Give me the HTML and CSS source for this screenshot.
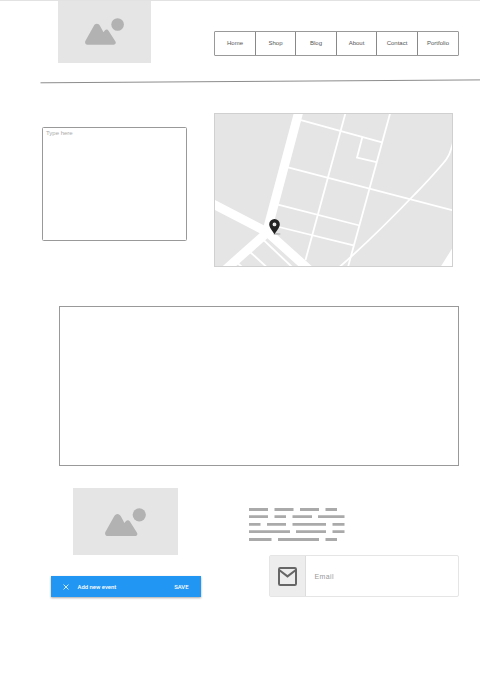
FILE: index.html
```html
<!DOCTYPE html>
<html lang="en">
<head>
<meta charset="utf-8">
<title>Contact</title>
<link rel="stylesheet" href="styles.css">
</head>
<body>
<svg class="defs" aria-hidden="true">
  <symbol id="landscape" viewBox="0 0 39 27">
    <path d="M2.5 26.7C.3 26.7-.5 24.5.5 22.7L8.6 8.2C10.200 5 13.500 5 15.200 8.200L18.500 14.200L19.800 12.600C21 11.200 22.600 11.300 23.700 12.900L30.300 23.300C31.400 25.100 30.500 26.700 28.500 26.700Z"/>
    <circle cx="32.600" cy="6.500" r="6.300"/>
  </symbol>
</svg>
<header class="header">
  <div class="logo"><svg class="logo-icon"><use href="#landscape"/></svg></div>
  <nav class="nav">
    <a>Home</a><a>Shop</a><a>Blog</a><a>About</a><a>Contact</a><a>Portfolio</a>
  </nav>
</header>
<svg class="rule" viewBox="0 0 440 6"><path d="M.5 3.800L440 .9"/></svg>
<main>
  <section class="contact">
    <div class="message">Type here</div>
    <svg class="map" viewBox="214 113 239 154">
      <rect class="land" x="214" y="113" width="239" height="154"/>
      <g class="major">
        <path d="M299 111L267 231"/>
        <path d="M212 203.500L267 232L310.500 271"/>
        <path d="M270 230L225 270"/>
      </g>
      <g class="minor">
        <path d="M301 120.200L382 142.300"/>
        <path d="M288 167.300L453 210.400"/>
        <path d="M278 204.600L359.500 225.500"/>
        <path d="M279 227L353.500 245.400"/>
        <path d="M345.500 113L305.500 260"/>
        <path d="M390.200 113L348 267"/>
        <path d="M362.300 137.300L357 157.700L376.500 162.200"/>
        <path d="M453 143C450 153 449 157 443 163.500C434 174 425 184 415 194C393 217 367 243 339.500 267"/>
        <path d="M262 238.500L292 267"/>
        <path d="M249 251L266.500 267"/>
        <path d="M237 262.500L242 267"/>
      </g>
      <path class="block" d="M440.500 267L453 247V267Z"/>
      <ellipse class="pin-shadow" cx="277" cy="233.900" rx="3.500" ry=".9"/>
      <path class="pin" fill-rule="evenodd" d="M274.500 234.200C272.500 231 269.200 227.500 269.200 224.300A5.300 5.300 0 0 1 279.800 224.300C279.800 227.500 276.500 231 274.500 234.200ZM274.500 222.500a1.900 1.900 0 1 0 0 3.800a1.900 1.900 0 1 0 0-3.800Z"/>
      <rect class="frame" x="214.500" y="113.500" width="238" height="153"/>
    </svg>
  </section>
  <section class="panel"></section>
  <section class="bottom">
    <div class="events">
      <div class="photo"><svg class="photo-icon"><use href="#landscape"/></svg></div>
      <div class="event-bar">
        <svg class="close" viewBox="0 0 6 6"><path d="M.5 .5L5.500 5.500M5.500 .5L.5 5.500"/></svg>
        <span class="event-title">Add new event</span>
        <span class="save">SAVE</span>
      </div>
    </div>
    <div class="signup">
      <svg class="text-lines" viewBox="0 0 96 34">
        <path d="M0 1.500h19M25.500 1.500h19M51 1.500h19M76.500 1.500h11.500"/>
        <path d="M0 8.700h19M25.500 8.700h11.500M43.500 8.700h19.500M69 8.700h26.500"/>
        <path d="M0 16.400h11.500M18 16.400h19M43.500 16.400h33.500M83.500 16.400h12"/>
        <path d="M0 23.700h41M47 23.700h30M83.500 23.700h12"/>
        <path d="M0 31.500h22.500M29 31.500h41M76.500 31.500h11.500"/>
      </svg>
      <div class="email">
        <div class="email-icon">
          <svg viewBox="0 0 19 19"><rect x="1" y="1" width="17" height="17" rx="1.200"/><path d="M1.500 3.200L9.500 9.400L17.500 3.200"/></svg>
        </div>
        <span class="email-label">Email</span>
      </div>
    </div>
  </section>
</main>
</body>
</html>
```

FILE: styles.css
```css
* { box-sizing: border-box; }

body {
  width: 480px;
  height: 677px;
  margin: 0;
  overflow: hidden;
  background: #fff;
  font-family: "Liberation Sans", Arial, sans-serif;
}

svg { display: block; }
.defs { width: 0; height: 0; }

.header {
  display: flex;
  align-items: flex-start;
  height: 78px;
  border-top: 1px solid #e2e2e2;
  padding-left: 58px;
}

.logo {
  width: 93px;
  height: 62px;
  padding: 17px 0 0 27px;
  background: #e5e5e5;
}
.logo-icon { width: 39px; height: 27px; fill: #b2b2b2; }

.nav {
  display: grid;
  grid-template-columns: 40px 40px 41px 40px 41px 41px;
  width: 245px;
  height: 25px;
  margin: 30px 0 0 63px;
  border: 1px solid #999;
  border-radius: 1px;
}
.nav a {
  color: #555;
  font-size: 6px;
  line-height: 23px;
  text-align: center;
}
.nav a + a { border-left: 1px solid #888; }

.rule { width: 440px; height: 6px; margin-left: 40px; margin-top: 1px; }
.rule path { fill: none; stroke: #8c8c8c; stroke-width: 1; }

.contact {
  display: flex;
  gap: 27px;
  margin: 28px 0 0 42px;
}
.message {
  width: 145px;
  height: 114px;
  margin-top: 14px;
  padding: 1px 3px;
  border: 1px solid #999;
  border-radius: 1.500px;
  color: #aaa;
  font-size: 6px;
  line-height: 8px;
}

.map { width: 239px; height: 154px; }
.land { fill: #e5e5e5; }
.major, .minor { fill: none; stroke: #fff; }
.major { stroke-width: 9px; }
.minor { stroke-width: 1.800px; }
.block { fill: #fff; }
.pin { fill: #222; }
.pin-shadow { fill: #bbb; }
.frame { fill: none; stroke: #d0d0d0; }

.panel {
  width: 400px;
  height: 160px;
  margin: 39px 0 0 59px;
  border: 1px solid #999;
}

.bottom {
  display: flex;
  margin: 22px 0 0 51px;
}
.events { width: 150px; }
.photo {
  width: 105px;
  height: 67px;
  margin-left: 22px;
  padding: 19.800px 0 0 31.800px;
  background: #e5e5e5;
}
.photo-icon { width: 41px; height: 28.400px; fill: #b2b2b2; }

.event-bar {
  display: flex;
  align-items: center;
  height: 21px;
  margin-top: 21px;
  padding: 0 12.500px 0 12px;
  background: #2196f3;
  box-shadow: 0 1px 2px rgba(0, 0, 0, .35);
  color: #fff;
  font-family: Roboto, sans-serif;
  font-size: 5.900px;
  font-weight: 500;
}
.close { width: 6px; height: 6px; fill: none; stroke: #fff; stroke-width: .8; }
.event-title { margin-left: 8.500px; }
.save { margin-left: auto; }

.signup { margin: 20px 0 0 48.300px; }
.text-lines { width: 96px; height: 34px; }
.text-lines path { stroke: #aaa; stroke-width: 2.800px; }

.email {
  display: flex;
  align-items: center;
  width: 190px;
  height: 42px;
  margin: 13px 0 0 19.700px;
  border: 1px solid #e5e5e5;
  border-radius: 2px;
}
.email-icon {
  display: flex;
  align-items: center;
  justify-content: center;
  width: 36px;
  height: 40px;
  border-right: 1px solid #ddd;
  background: #ededed;
}
.email-icon svg { width: 19px; height: 19px; fill: none; stroke: #666; stroke-width: 2; }
.email-label {
  margin-left: 8.500px;
  color: #999;
  font-size: 7px;
  letter-spacing: .400px;
}
```
